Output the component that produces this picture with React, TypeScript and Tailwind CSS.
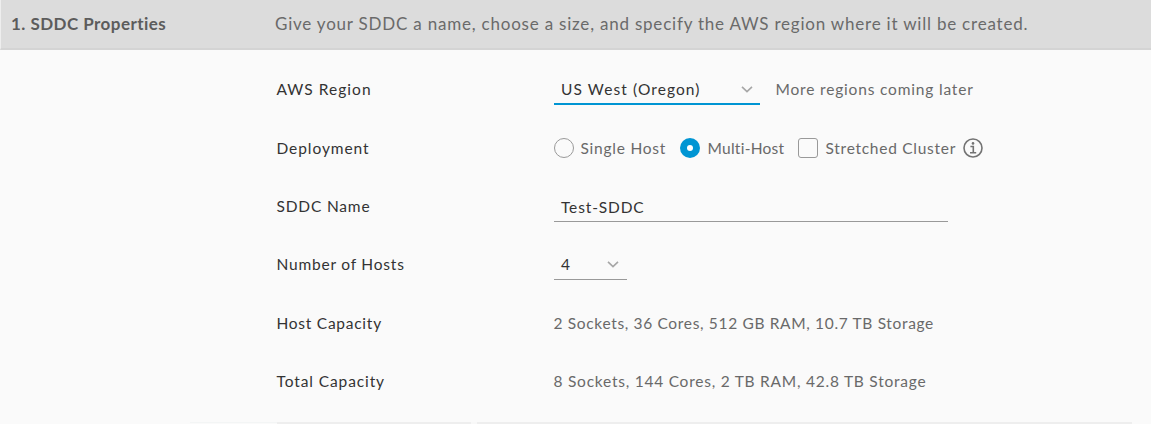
import type { ReactNode } from "react";

function Row({ label, labelClass, children }: { label: string; labelClass: string; children: ReactNode }) {
  return (
    <div className="flex h-[58.35px] items-center">
      <div className={`w-[277px] shrink-0 text-[#333] ${labelClass}`}>{label}</div>
      <div className="flex items-center text-[#696969]">{children}</div>
    </div>
  );
}

function Chevron() {
  return (
    <svg width="12" height="8" viewBox="0 0 12 8" fill="none" stroke="#a6a6a6" strokeWidth="1.6">
      <path d="M1 1.8 6 6.6 11 1.8" />
    </svg>
  );
}

export default function App() {
  return (
    <main className="h-[424px] w-[1151px] overflow-hidden bg-[#fafafa] font-['Lato',sans-serif] text-[15.5px] leading-5 whitespace-nowrap">
      <header className="flex h-[50px] items-center border-b-2 border-l border-b-[#d4d4d4] border-l-[#eee] bg-[#dcdcdc] pl-[10px] text-[17px] text-[#6a6a6a]">
        <h1 className="w-[264px] shrink-0 font-bold tracking-[0.45px] text-[#5c5c5c]">1. SDDC Properties</h1>
        <p className="tracking-[0.79px]">Give your SDDC a name, choose a size, and specify the AWS region where it will be created.</p>
      </header>

      <section className="flex h-[372px] flex-col pt-[10px] pl-[276.5px]">
        <Row label="AWS Region" labelClass="tracking-[1.03px]">
          <div className="mt-0.5 flex h-[30px] w-[206px] items-center justify-between border-b-2 border-[#0095d3] pr-[7px] pl-[7.5px] text-[#333]">
            <span className="tracking-[1.1px]">US West (Oregon)</span>
            <Chevron />
          </div>
          <span className="ml-4 tracking-[0.82px]">More regions coming later</span>
        </Row>
        <Row label="Deployment" labelClass="tracking-[0.93px]">
          <span className="size-5 shrink-0 rounded-full border border-[#999]" />
          <span className="ml-[7px] w-[99px] tracking-[0.76px]">Single Host</span>
          <span className="flex size-5 shrink-0 items-center justify-center rounded-full bg-[#0095d3]">
            <span className="size-[6px] rounded-full bg-white" />
          </span>
          <span className="ml-2 w-[90px] tracking-[0.26px]">Multi-Host</span>
          <span className="size-5 shrink-0 rounded-[3px] border border-[#999]" />
          <span className="ml-2 w-[137px] tracking-[0.73px]">Stretched Cluster</span>
          <svg width="20" height="20" viewBox="0 0 20 20" fill="none" stroke="#737373" strokeWidth="1.6">
            <circle cx="10" cy="10" r="9" />
            <path d="M7.4 8.5h2.9v6M7 14.7h6.2" />
            <circle cx="10" cy="5.4" r="1.3" fill="#737373" stroke="none" />
          </svg>
        </Row>
        <Row label="SDDC Name" labelClass="tracking-[0.82px]">
          <div className="mt-[3px] flex h-[29px] w-[394px] items-center border-b border-[#999] pl-[7.5px] text-[#333]">
            <span className="tracking-[0.86px]">Test-SDDC</span>
          </div>
        </Row>
        <Row label="Number of Hosts" labelClass="tracking-[0.79px]">
          <div className="mt-px flex h-[30px] w-[73px] items-center justify-between border-b border-[#999] pr-[7.5px] pl-[7.5px] text-[#333]">
            <span>4</span>
            <Chevron />
          </div>
        </Row>
        <Row label="Host Capacity" labelClass="tracking-[0.74px]">
          <span className="tracking-[0.66px]">2 Sockets, 36 Cores, 512 GB RAM, 10.7 TB Storage</span>
        </Row>
        <Row label="Total Capacity" labelClass="tracking-[0.9px]">
          <span className="tracking-[0.76px]">8 Sockets, 144 Cores, 2 TB RAM, 42.8 TB Storage</span>
        </Row>
      </section>
      <div className="ml-[190px] flex h-[2px] w-[942px]">
        <div className="w-[87px] border-t border-[#f3f5f5]" />
        <div className="w-[194px] bg-[#eee]" />
        <div className="w-[6px] bg-[#f8f8f8]" />
        <div className="grow bg-[#eee]" />
      </div>
    </main>
  );
}
